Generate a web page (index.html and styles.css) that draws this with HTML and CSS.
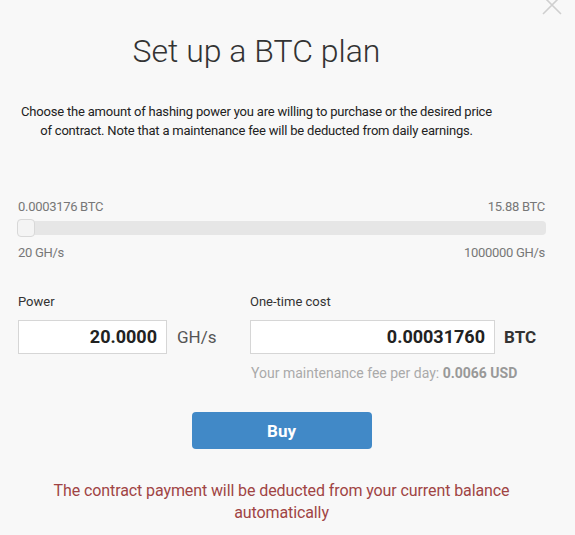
FILE: index.html
```html
<!DOCTYPE html>
<html>
<head>
<meta charset="utf-8">
<link rel="stylesheet" href="styles.css">
</head>
<body>
<div class="modal">
  <button class="close" aria-label="Close">
    <svg width="22" height="22" viewBox="0 0 22 22"><path d="M2 2L20 20M20 2L2 20" stroke="#cfcfcf" stroke-width="1.6" fill="none"/></svg>
  </button>
  <header class="head">
    <h1 class="title">Set up a BTC plan</h1>
    <p class="desc">Choose the amount of hashing power you are willing to purchase or the desired price of contract. Note that a maintenance fee will be deducted from daily earnings.</p>
  </header>
  <section class="slider">
    <div class="slider-row"><span>0.0003176 BTC</span><span>15.88 BTC</span></div>
    <div class="track"><div class="handle"></div></div>
    <div class="slider-row"><span>20 GH/s</span><span>1000000 GH/s</span></div>
  </section>
  <section class="fields">
    <div class="field field-power">
      <label class="label">Power</label>
      <div class="input-row">
        <div class="input">20.0000</div>
        <span class="unit">GH/s</span>
      </div>
    </div>
    <div class="field field-cost">
      <label class="label">One-time cost</label>
      <div class="input-row">
        <div class="input">0.00031760</div>
        <span class="unit unit-bold">BTC</span>
      </div>
      <p class="fee">Your maintenance fee per day: <b>0.0066 USD</b></p>
    </div>
  </section>
  <div class="actions"><button class="buy">Buy</button></div>
  <p class="note">The contract payment will be deducted from your current balance automatically</p>
</div>
</body>
</html>
```
FILE: styles.css
```css
html, body { margin: 0; padding: 0; }
body {
  background: #f8f8f8;
  font-family: Roboto, "Liberation Sans", sans-serif;
  color: #333;
  width: 575px;
  height: 535px;
  overflow: hidden;
}
.modal {
  position: relative;
  padding: 0 29px 0 17px;
}
.close {
  position: absolute;
  top: -6px;
  right: 12px;
  background: none;
  border: 0;
  padding: 0;
  width: 22px;
  height: 22px;
}
.head {
  padding-right: 50px;
  text-align: center;
}
.title {
  margin: 0;
  padding-top: 29px;
  font-weight: 300;
  font-size: 32px;
  line-height: 44px;
  color: #333;
}
.desc {
  width: 476px;
  margin: 29px auto 0;
  font-size: 13px;
  letter-spacing: -0.2px;
  line-height: 19px;
  color: #222;
}
.slider {
  margin-top: 59px;
}
.slider-row {
  display: flex;
  justify-content: space-between;
  font-size: 13px;
  letter-spacing: -0.3px;
  line-height: 16px;
  color: #777;
  padding: 0 1px;
}
.track {
  position: relative;
  margin: 6px 0 10px;
  height: 14px;
  background: #e6e6e6;
  border-radius: 4px;
}
.handle {
  position: absolute;
  left: 0;
  top: -2px;
  width: 16px;
  height: 16px;
  background: #f4f4f4;
  border: 1px solid #d8d8d8;
  border-radius: 4px;
}
.fields {
  display: flex;
  margin-top: 33px;
  padding-left: 1px;
}
.field-power { width: 232px; }
.label {
  display: block;
  font-size: 13px;
  line-height: 16px;
  color: #333;
  margin-bottom: 10px;
}
.input-row {
  display: flex;
  align-items: center;
}
.input {
  box-sizing: border-box;
  height: 34px;
  border: 1px solid #d6d6d6;
  background: #fff;
  text-align: right;
  font-weight: 700;
  font-size: 18px;
  line-height: 32px;
  padding: 0 9px;
  color: #222;
}
.field-power .input { width: 149px; }
.field-cost .input { width: 245px; }
.unit {
  margin-left: 10px;
  font-size: 17px;
  color: #555;
}
.unit-bold { font-weight: 700; color: #333; margin-left: 9px; }
.fee {
  margin: 11px 0 0 0;
  padding-left: 1px;
  font-size: 14px;
  color: #aaa;
}
.fee b { color: #999; }
.actions {
  display: flex;
  justify-content: center;
  margin-top: 31px;
}
.buy {
  width: 180px;
  height: 37px;
  background: #4189c7;
  border: 0;
  border-radius: 4px;
  color: #fff;
  font-family: Roboto, "Liberation Sans", sans-serif;
  font-weight: 700;
  font-size: 17px;
}
.note {
  margin: 31px 0 0;
  padding: 0 20px;
  text-align: center;
  font-size: 16px;
  letter-spacing: -0.1px;
  line-height: 22px;
  color: #a04444;
}
```
